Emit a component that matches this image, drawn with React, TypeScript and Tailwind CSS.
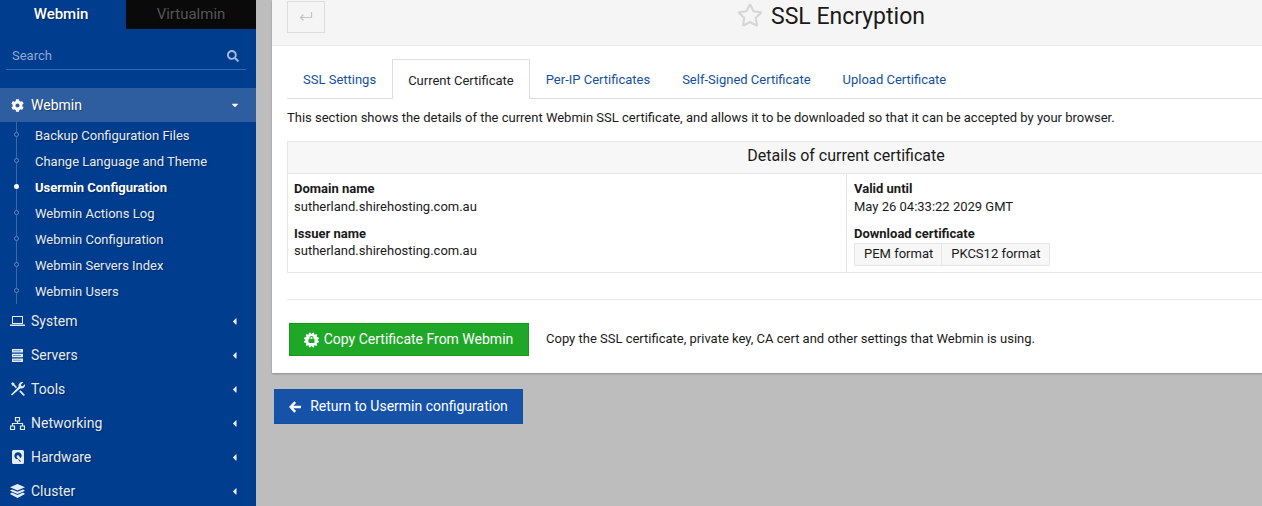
import React from "react";
import {
  FaCertificate,
  FaCog,
  FaLock,
  FaRegStar,
  FaSearch,
  FaCaretDown,
  FaCaretLeft,
} from "react-icons/fa";

const subItems = [
  { label: "Backup Configuration Files" },
  { label: "Change Language and Theme" },
  { label: "Usermin Configuration", active: true },
  { label: "Webmin Actions Log" },
  { label: "Webmin Configuration" },
  { label: "Webmin Servers Index" },
  { label: "Webmin Users" },
];

const LaptopIcon = () => (
  <svg width="15" height="12" viewBox="0 0 15 12" fill="currentColor">
    <path d="M2 1h11v8H2V1zm1 1v6h9V2H3z" fillRule="evenodd" />
    <path d="M0 9.5h15V11H0z" />
  </svg>
);

const ServerIcon = () => (
  <svg width="11" height="13" viewBox="0 0 11 13" fill="currentColor">
    <path d="M0 0h11v3.5H0V0zm0 4.7h11v3.5H0V4.7zm0 4.8h11V13H0V9.5z" />
    <g fill="#003d8f">
      <path d="M1.5 1.2h1v1h-1zm2 0h1v1h-1zm2 0h1v1h-1zm2 0h1v1h-1zM1.5 6h1v1h-1zm2 0h1v1h-1zm2 0h1v1h-1zm2 0h1v1h-1zM1.5 10.8h1v1h-1zm2 0h1v1h-1zm2 0h1v1h-1zm2 0h1v1h-1z" />
    </g>
  </svg>
);

const ToolsIcon = () => (
  <svg width="14" height="14" viewBox="0 0 14 14" fill="currentColor">
    <path d="M1 13.5L0 12.5l7.6-7.7C7.2 3.3 7.7 1.7 9 .7c1-.7 2.2-.9 3.3-.5L10 2.4l.3 1.5 1.5.4L14 2c.3 1.2 0 2.5-1 3.4-1 1-2.4 1.3-3.7.9L1 13.5z" />
    <path d="M.2 1.5L1.6.2l1.7 1 .2 1.4L6 5.1 4.9 6.2 2.5 3.8 1.2 3.5.2 1.5zM8.2 9.4l1.2-1.2 4 4c.4.4.4.9 0 1.3-.4.4-.9.4-1.3 0l-3.9-4.1z" />
  </svg>
);

const NetworkIcon = () => (
  <svg width="15" height="13" viewBox="0 0 15 13" fill="none" stroke="currentColor" strokeWidth="1.2">
    <path d="M5.5.5h4v3.5h-4zM.5 9h4v3.5h-4zM10.5 9h4v3.5h-4zM7.5 4v2.5M2.5 9V6.5h10V9" />
  </svg>
);

const HddIcon = () => (
  <svg width="12" height="14" viewBox="0 0 12 14" fill="currentColor">
    <path
      fillRule="evenodd"
      d="M1.5 0h9A1.5 1.5 0 0 1 12 1.5v11a1.5 1.5 0 0 1-1.5 1.5h-9A1.5 1.5 0 0 1 0 12.5v-11A1.5 1.5 0 0 1 1.5 0zM6 2.2a3.6 3.6 0 0 0-1 7.05L6.2 8a1.4 1.4 0 1 1 1.2-1.2l1.4 1.4A3.6 3.6 0 0 0 6 2.2zM6 9.4l2 2.4h1.2L7 9.2z"
    />
  </svg>
);

const LayersIcon = () => (
  <svg width="15" height="14" viewBox="0 0 14 13" fill="currentColor">
    <path d="M7 0l7 3-7 3-7-3 7-3z" />
    <path d="M1.8 5L7 7.3 12.2 5 14 6.2 7 9.2 0 6.2 1.8 5z" />
    <path d="M1.8 8L7 10.3 12.2 8 14 9.4 7 13 0 9.4 1.8 8z" />
  </svg>
);

const menu = [
  { label: "System", icon: <LaptopIcon /> },
  { label: "Servers", icon: <ServerIcon /> },
  { label: "Tools", icon: <ToolsIcon /> },
  { label: "Networking", icon: <NetworkIcon /> },
  { label: "Hardware", icon: <HddIcon /> },
  { label: "Cluster", icon: <LayersIcon /> },
];

const tabs = [
  { label: "SSL Settings" },
  { label: "Current Certificate", active: true },
  { label: "Per-IP Certificates" },
  { label: "Self-Signed Certificate" },
  { label: "Upload Certificate" },
];

const Sidebar = () => (
  <aside className="w-[256px] h-[506px] shrink-0 overflow-hidden bg-[#003d8f] text-white [text-shadow:1px_1px_1px_rgba(0,0,0,0.35)]">
    <div className="flex h-[29px] text-[15px] font-medium leading-[28px] text-center">
      <div className="w-[122px]">Webmin</div>
      <div className="ml-[4px] w-[130px] bg-[#0a0a0a] text-[#555] font-normal">Virtualmin</div>
    </div>
    <div className="mx-[6px] mt-[12px] h-[29px] w-[240px] flex items-center justify-between border-b border-[#3a68a8] pl-[6px] pr-[7px] pt-[2px] text-[13px] text-[#8fa9d0] [text-shadow:none]">
      <span>Search</span>
      <FaSearch size={12} className="text-[#a3bad9]" />
    </div>
    <div className="mt-[18px] flex h-[34px] items-center bg-[#2e5e9f] pl-[11px] pr-[16px] text-[14px]">
      <FaCog size={13} className="w-[13px]" />
      <span className="ml-[7px] flex-1">Webmin</span>
      <FaCaretDown size={10} />
    </div>
    <div className="relative">
      <div className="absolute left-[16px] top-0 bottom-0 w-px bg-[#3a68a8]" />
      {subItems.map((s) => (
        <div key={s.label} className={`relative flex h-[26px] items-center pl-[35px] pt-[2px] text-[13px] ${s.active ? "font-bold" : "text-[#e6ecf5]"}`}>
          <span className={`absolute left-[14px] top-[10px] h-[5px] w-[5px] rounded-full ${s.active ? "bg-white" : "border border-[#5f84b8] bg-[#003d8f]"}`} />
          {s.label}
        </div>
      ))}
    </div>
    {menu.map((m) => (
      <div key={m.label} className="flex h-[34px] items-center pl-[10px] pr-[16px] text-[14px] text-[#e6ecf5]">
        <span className="flex w-[15px] justify-center">{m.icon}</span>
        <span className="ml-[6px] flex-1">{m.label}</span>
        <FaCaretLeft size={11} />
      </div>
    ))}
  </aside>
);

const Main = () => (
  <main className="flex-1 h-[506px] overflow-hidden bg-[#bdbdbd] pl-[16px]">
    <div className="w-[1150px] bg-white shadow-[0_1px_2px_rgba(0,0,0,0.25)]">
      <div className="relative flex h-[46px] justify-center border-b border-[#eaeaea] bg-[#f5f5f5]">
        <div className="absolute left-[15px] top-[1px] flex h-[32px] w-[38px] items-center justify-center border border-[#dddddd] text-[#c4c4c4]">
          <svg width="14" height="12" viewBox="0 0 14 12" fill="none" stroke="currentColor" strokeWidth="1.2">
            <path d="M12.5 1v5.5H1.5M4.5 3.5l-3 3 3 3" />
          </svg>
        </div>
        <div className="relative mr-[-2px]">
          <FaRegStar size={26} className="absolute left-[-34px] top-[2px] text-[#d6d6d6]" />
          <h1 className="text-[23px] leading-[34px] text-[#1a1a1a]">SSL Encryption</h1>
        </div>
      </div>

      <div className="px-[15px]">
        <div className="mt-[13px] flex h-[40px] border-b border-[#dddddd] text-[13px]">
          {tabs.map((t) =>
            t.active ? (
              <div key={t.label} className="h-[40px] border border-b-0 border-[#dddddd] bg-white px-[15px] pt-[11px] text-[#222]">
                {t.label}
              </div>
            ) : (
              <div key={t.label} className="px-[16px] pt-[11px] text-[#14509f]">
                {t.label}
              </div>
            ),
          )}
        </div>

        <p className="mt-[10px] text-[13px] leading-[18px] text-[#1a1a1a]">
          This section shows the details of the current Webmin SSL certificate, and allows it to be downloaded so that it can be accepted by your browser.
        </p>

        <div className="mt-[14px] w-[1118px] border border-[#e6e6e6] text-[13px] leading-[18px] text-[#1a1a1a]">
          <div className="h-[32px] border-b border-[#e6e6e6] bg-[#f7f7f7] text-center text-[16px] leading-[27px]">
            Details of current certificate
          </div>
          <div className="flex h-[98px]">
            <div className="w-[559px] border-r border-[#e6e6e6] px-[6px] pt-[6px]">
              <div className="font-bold">Domain name</div>
              <div>sutherland.shirehosting.com.au</div>
              <div className="mt-[9px] font-bold">Issuer name</div>
              <div className="-mt-[1px]">sutherland.shirehosting.com.au</div>
            </div>
            <div className="flex-1 px-[7px] pt-[6px]">
              <div className="font-bold">Valid until</div>
              <div>May 26 04:33:22 2029 GMT</div>
              <div className="mt-[9px] font-bold">Download certificate</div>
              <div className="flex h-[23px] w-fit border border-[#e6e6e6] bg-[#f7f7f7] leading-[20px]">
                <div className="border-r border-[#e6e6e6] pl-[9px] pr-[8px]">PEM format</div>
                <div className="px-[9px]">PKCS12 format</div>
              </div>
            </div>
          </div>
        </div>

        <div className="mt-[26px] w-[1118px] border-t border-[#eaeaea]" />

        <div className="flex items-center pt-[23px] pb-[17px] pl-[2px] text-[13px]">
          <button className="flex h-[33px] w-[240px] items-center justify-center border border-[#1b931f] bg-[#1fa828] pr-[1px] text-[14px] text-white">
            <span className="relative mr-[5px] flex h-[15px] w-[15px] items-center justify-center">
              <FaCertificate size={16} />
              <FaLock size={7} className="absolute text-[#1fa828]" />
            </span>
            Copy Certificate From Webmin
          </button>
          <span className="ml-[17px] pb-[2px] text-[#1a1a1a]">
            Copy the SSL certificate, private key, CA cert and other settings that Webmin is using.
          </span>
        </div>
      </div>
    </div>

    <button className="ml-[2px] mt-[16px] flex h-[35px] w-[249px] items-center justify-center border border-[#1450a0] bg-[#1552a8] text-[14px] text-white">
      <svg width="12" height="12" viewBox="0 0 12 12" fill="none" stroke="currentColor" strokeWidth="2.4" className="mr-[9px]">
        <path d="M6.2 1.2L1.6 6l4.6 4.8M2 6h10" />
      </svg>
      Return to Usermin configuration
    </button>
  </main>
);

export default function App() {
  return (
    <div className="flex h-[506px] w-[1262px] overflow-hidden font-['Roboto',sans-serif]">
      <Sidebar />
      <Main />
    </div>
  );
}
